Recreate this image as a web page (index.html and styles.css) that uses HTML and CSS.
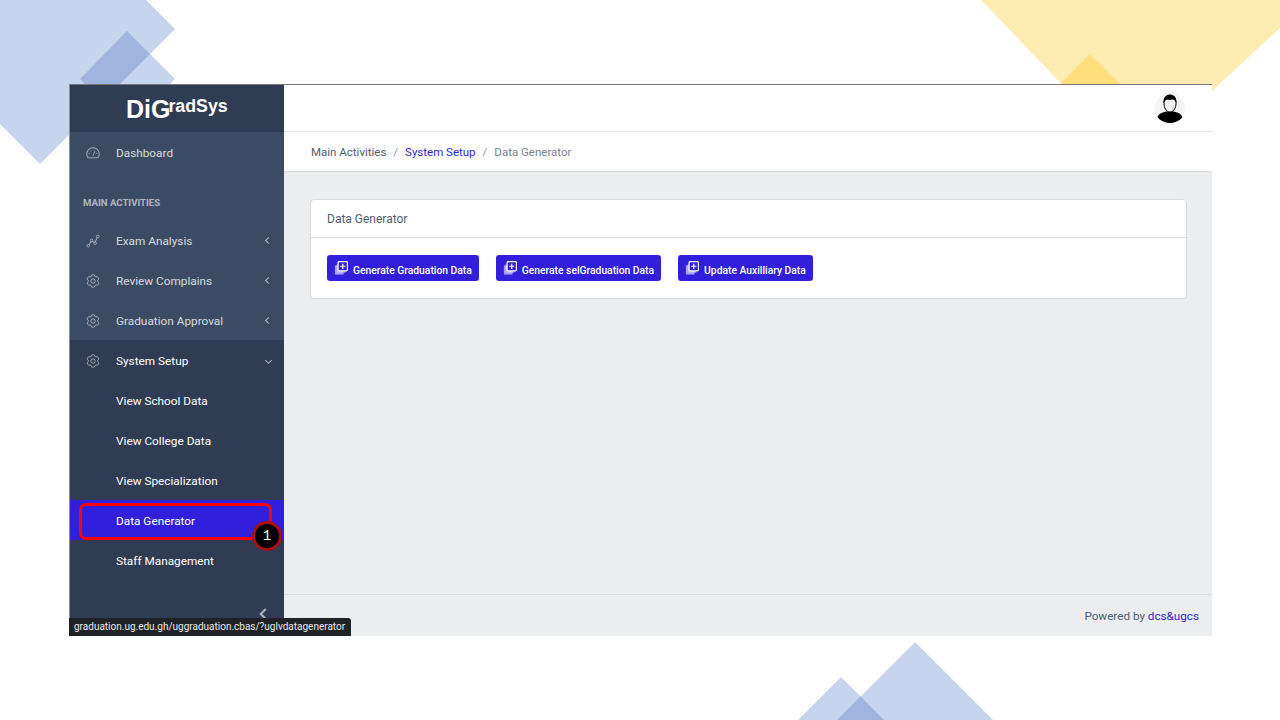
FILE: index.html
```html
<!DOCTYPE html>
<html lang="en">
<head>
    <meta charset="UTF-8">
    <meta name="viewport" content="width=device-width, initial-scale=1.0">
    <title>DiGradSys - Data Generator</title>
    <link rel="stylesheet" href="styles.css">
</head>
<body>
    <svg class="shapes" width="1280" height="720" viewBox="0 0 1280 720">
        <g fill="#4472c4" fill-opacity="0.3">
            <polygon points="0,0 146,0 175,29 40,164 0,124"/>
            <polygon points="127,31 175,79 127,127 80,79"/>
            <polygon points="915,642 993,720 837,720"/>
            <polygon points="841,677 884,720 798,720"/>
        </g>
        <g fill="#ffc000" fill-opacity="0.3">
            <polygon points="981,0 1280,0 1280,28 1212,91 1212,99 1076,99"/>
            <polygon points="1090,54 1135,99 1045,99"/>
        </g>
    </svg>

    <svg class="defs" width="0" height="0">
        <symbol id="i-gauge" viewBox="0 0 16 16">
            <path d="M2.400 13.500A7.200 7.200 0 0 1 8 2a7.200 7.200 0 0 1 5.600 11.500H2.400z" fill="none" stroke="currentColor" stroke-width="1.200"/>
            <path d="M8 11l2.200-5.500M3.200 8.500h1.400M11.400 8.500h1.400M5 5.200l.9.9" fill="none" stroke="currentColor"/>
        </symbol>
        <symbol id="i-chart" viewBox="0 0 16 16">
            <path d="M3 13l3.600-5.400 3.400 2.600L13 3.600" fill="none" stroke="currentColor" stroke-width="1.200"/>
            <circle cx="2.600" cy="13.400" r="1.500" fill="#3c4b64" stroke="currentColor"/>
            <circle cx="6.400" cy="7.200" r="1.500" fill="#3c4b64" stroke="currentColor"/>
            <circle cx="10.400" cy="10.600" r="1.500" fill="#3c4b64" stroke="currentColor"/>
            <circle cx="13.400" cy="2.800" r="1.500" fill="#3c4b64" stroke="currentColor"/>
        </symbol>
        <symbol id="i-gear" viewBox="0 0 16 16">
            <path d="M6.600 1h2.800l.8 2 3.200.3 1.400 2.400L13 8l1.800 2.300-1.400 2.400-2.900.1-1.100 2.200H6.600l-1.100-2.200-2.900-.1-1.400-2.400L3 8 1.200 5.700l1.400-2.400 3.200-.3z" fill="none" stroke="currentColor" stroke-width="1.100" stroke-linejoin="round"/>
            <circle cx="8" cy="8" r="2.500" fill="none" stroke="currentColor" stroke-width="1.100"/>
        </symbol>
        <symbol id="i-library" viewBox="0 0 16 16">
            <path d="M3 3h10v10.500H3z" fill="currentColor" opacity="0.6"/>
            <path d="M1 5h10v10.500H1z" fill="currentColor" opacity="0.8"/>
            <rect x="4.700" y="0.700" width="10.600" height="10.600" rx="1" fill="#321fdb" stroke="#fff" stroke-width="1.300"/>
            <path d="M10 3v6M7 6h6" stroke="#fff" fill="none" stroke-width="1.400"/>
        </symbol>
    </svg>

    <div class="slide">
        <div class="app">
            <aside class="sidebar">
                <div class="brand"><span class="brand-big">DiG</span><span class="brand-small">radSys</span></div>
                <nav class="nav">
                    <a class="nav-item"><svg class="nav-icon"><use href="#i-gauge"/></svg>Dashboard</a>
                    <div class="nav-title">MAIN ACTIVITIES</div>
                    <a class="nav-item"><svg class="nav-icon"><use href="#i-chart"/></svg>Exam Analysis<span class="chev"></span></a>
                    <a class="nav-item"><svg class="nav-icon"><use href="#i-gear"/></svg>Review Complains<span class="chev"></span></a>
                    <a class="nav-item"><svg class="nav-icon"><use href="#i-gear"/></svg>Graduation Approval<span class="chev"></span></a>
                    <div class="nav-group">
                        <a class="nav-item open"><svg class="nav-icon"><use href="#i-gear"/></svg>System Setup<span class="chev down"></span></a>
                        <a class="nav-item sub">View School Data</a>
                        <a class="nav-item sub">View College Data</a>
                        <a class="nav-item sub">View Specialization</a>
                        <a class="nav-item sub active">Data Generator</a>
                        <a class="nav-item sub">Staff Management</a>
                        <div class="minimizer"><span class="chev big"></span></div>
                    </div>
                </nav>
            </aside>

            <div class="wrapper">
                <header class="topbar">
                    <div class="avatar">
                        <svg width="30" height="30" viewBox="0 0 30 30">
                            <circle cx="15" cy="15" r="15" fill="#f3f3f3"/>
                            <path d="M2.500 24c1-3.500 5.500-4.600 8.500-5.600h8c3 1 7.500 2.100 8.500 5.600-2.500 3.600-7.500 6-12.500 6s-10-2.400-12.500-6z" fill="#000"/>
                            <path d="M9 10.500c0-3.500 2-5.500 6-5.500s6 2 6 5.500c0 4.500-2.500 8.500-6 8.500s-6-4-6-8.500z" fill="#f3f3f3" stroke="#000"/>
                            <path d="M8.500 10.500C8 5 10.500 1.500 15 1.500s7 3.500 6.500 9c-.8-2.500-2-3.500-3.500-4-2 .6-4.500.6-6 0-1.500.5-2.700 1.500-3.500 4z" fill="#000"/>
                        </svg>
                    </div>
                </header>
                <div class="breadcrumb">
                    <span>Main Activities</span><span class="sep">/</span>
                    <a class="crumb-link">System Setup</a><span class="sep">/</span>
                    <span class="crumb-now">Data Generator</span>
                </div>
                <main class="content">
                    <section class="card">
                        <div class="card-header">Data Generator</div>
                        <div class="card-body">
                            <button class="btn"><svg class="btn-icon"><use href="#i-library"/></svg><span class="btn-label">Generate Graduation Data</span></button>
                            <button class="btn"><svg class="btn-icon"><use href="#i-library"/></svg><span class="btn-label">Generate selGraduation Data</span></button>
                            <button class="btn"><svg class="btn-icon"><use href="#i-library"/></svg><span class="btn-label">Update Auxilliary Data</span></button>
                        </div>
                    </section>
                </main>
                <footer class="footer">Powered by&nbsp;<a class="foot-link">dcs&amp;ugcs</a></footer>
            </div>

            <div class="callout"></div>
            <div class="step">1</div>
            <div class="status-url">graduation.ug.edu.gh/uggraduation.cbas/?uglvdatagenerator</div>
        </div>
    </div>
</body>
</html>
```

FILE: styles.css
```css
* {
    box-sizing: border-box;
}

body {
    margin: 0;
    background-color: #fff;
    font-family: Roboto, "Noto Sans", sans-serif;
    overflow: hidden;
}

.shapes {
    position: absolute;
    left: 0;
    top: 0;
}

.defs {
    position: absolute;
}

.slide {
    position: relative;
    width: 1280px;
    height: 720px;
    padding: 84px 68px 0 69px;
}

.app {
    position: relative;
    display: flex;
    height: 552px;
    border-top: 1px solid #77777c;
    background-color: #ebedef;
}

/* sidebar */
.sidebar {
    display: flex;
    flex-direction: column;
    width: 215px;
    border-left: 1px solid #8a8f99;
    background-color: #3c4b64;
    color: rgba(255, 255, 255, 0.8);
}

.brand {
    height: 47px;
    padding: 6px 0 0 56px;
    background-color: #303c54;
    color: #fff;
    font-family: "Liberation Sans", Arial, sans-serif;
    font-weight: bold;
    white-space: nowrap;
}

.brand-big {
    font-size: 25px;
    line-height: 36px;
}

.brand-small {
    position: relative;
    top: -6px;
    margin-left: -2px;
    font-size: 17.800px;
}

.nav {
    display: flex;
    flex: 1;
    flex-direction: column;
}

.nav-item {
    display: flex;
    align-items: center;
    height: 40px;
    padding-left: 16px;
    padding-top: 1px;
    font-size: 11.800px;
    white-space: nowrap;
}

.nav-icon {
    width: 14px;
    height: 14px;
    margin-right: 16px;
    color: rgba(255, 255, 255, 0.5);
}

.nav-title {
    padding: 25px 0 0 13px;
    height: 48px;
    font-size: 9.600px;
    font-weight: bold;
    color: rgba(255, 255, 255, 0.6);
}

.chev {
    width: 5px;
    height: 5px;
    margin-left: auto;
    margin-right: 13px;
    border-left: 1px solid rgba(255, 255, 255, 0.6);
    border-bottom: 1px solid rgba(255, 255, 255, 0.6);
    transform: rotate(45deg);
}

.chev.down {
    transform: rotate(-45deg);
}

.chev.big {
    width: 8px;
    height: 8px;
    margin-right: 0;
    border-width: 2px;
}

.nav-group {
    flex: 1;
    background-color: #303c54;
}

.nav-item.open {
    color: #fff;
}

.nav-item.sub {
    padding-left: 46px;
    color: #fff;
}

.nav-item.active {
    background-color: #321fdb;
}

.minimizer {
    display: flex;
    padding: 30px 15px 0 0;
}

/* main column */
.wrapper {
    display: flex;
    flex: 1;
    flex-direction: column;
}

.topbar {
    display: flex;
    justify-content: flex-end;
    align-items: center;
    height: 47px;
    padding-right: 27px;
    background-color: #fff;
    border-bottom: 1px solid #e4e6e9;
}

.avatar {
    height: 30px;
}

.breadcrumb {
    display: flex;
    align-items: center;
    height: 40px;
    padding-left: 27px;
    background-color: #fff;
    border-bottom: 1px solid #d8dbe0;
    font-size: 11.500px;
    color: #4f5d73;
}

.sep {
    margin: 0 7px;
    color: #8a93a2;
}

.crumb-link {
    color: #321fdb;
}

.crumb-now {
    color: #768192;
}

.content {
    flex: 1;
    padding: 27px 25px 0 26px;
}

.card {
    height: 100px;
    background-color: #fff;
    border: 1px solid #d8dbe0;
    border-radius: 4px;
}

.card-header {
    height: 38px;
    padding: 12px 0 0 16px;
    border-bottom: 1px solid #d8dbe0;
    font-size: 12px;
    color: #4f5d73;
}

.card-body {
    display: flex;
    gap: 17px;
    padding: 17px 16px;
}

.btn {
    display: flex;
    align-items: center;
    height: 26px;
    padding: 0 7px;
    border: none;
    border-radius: 3px;
    background-color: #321fdb;
    color: #fff;
    font-family: inherit;
    font-size: 10.300px;
    font-weight: 500;
    white-space: nowrap;
}

.btn-icon {
    width: 14px;
    height: 14px;
    margin-right: 5px;
    color: #c9c0ff;
}

.btn-label {
    margin-top: 4px;
}

.footer {
    display: flex;
    justify-content: flex-end;
    align-items: center;
    height: 42px;
    padding-right: 13px;
    border-top: 1px solid #d8dbe0;
    font-size: 11.700px;
    color: #4f5d73;
}

.foot-link {
    color: #321fdb;
}

/* annotations drawn over the screenshot */
.callout {
    position: absolute;
    left: 10px;
    top: 418px;
    width: 193px;
    height: 37px;
    border: 3px solid #f00;
    border-radius: 7px;
}

.step {
    position: absolute;
    left: 183px;
    top: 436px;
    width: 30px;
    height: 30px;
    border: 3px solid #a80f0f;
    border-radius: 50%;
    background-color: #000;
    color: #fff;
    font-family: "Liberation Mono", monospace;
    font-size: 14px;
    line-height: 24px;
    text-align: center;
}

.status-url {
    position: absolute;
    left: 0;
    bottom: 0;
    width: 282px;
    height: 18px;
    padding: 0 5px;
    border-radius: 0 3px 0 0;
    background-color: #202124;
    color: #e8eaed;
    font-size: 10px;
    line-height: 18px;
    white-space: nowrap;
}
```
